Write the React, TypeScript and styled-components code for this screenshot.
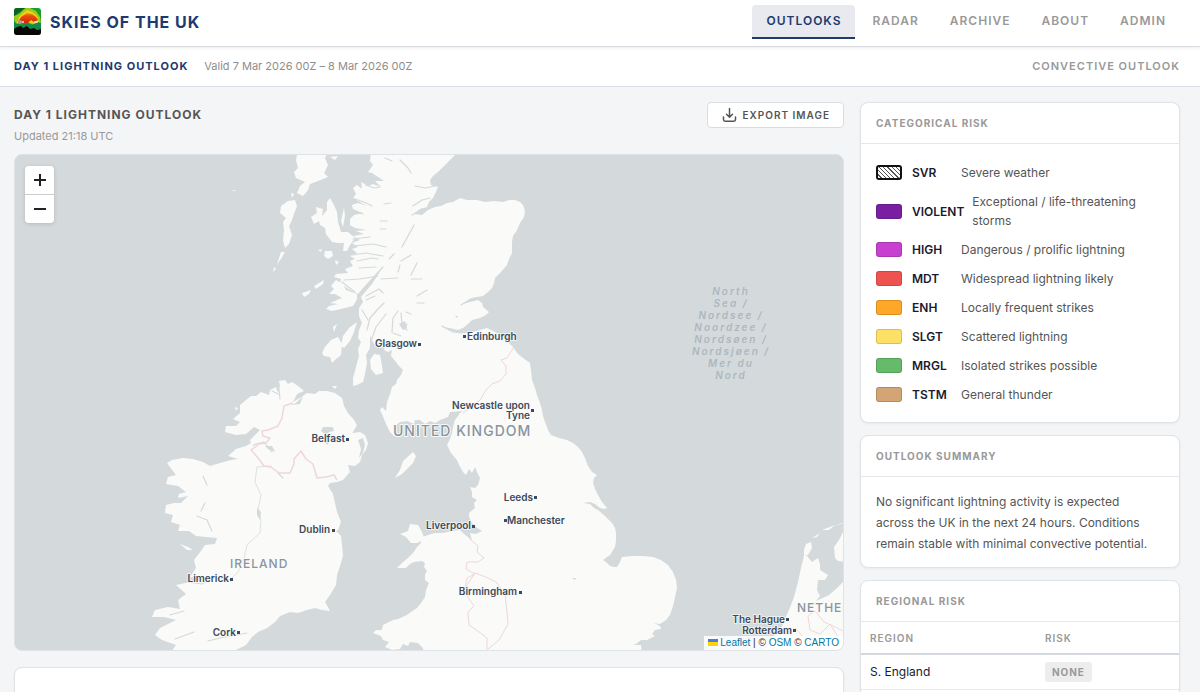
import React from "react";
import styled, { createGlobalStyle } from "styled-components";

const GlobalStyle = createGlobalStyle`
  *, *::before, *::after { box-sizing: border-box; }
  body {
    margin: 0;
    background: #f4f5f7;
    color: #1a1a2e;
    font-family: Inter, "Liberation Sans", sans-serif;
    font-size: 13px;
    overflow-x: hidden;
  }
  h1, h2, p, ul { margin: 0; padding: 0; }
`;

const Header = styled.header`
  display: flex;
  justify-content: space-between;
  height: 47px;
  padding: 5px 20px 0 14px;
  background: #fff;
  border-bottom: 1px solid #d9dce1;
  box-shadow: 0 1px 3px rgba(0, 0, 0, 0.08);
  position: relative;
`;

const Brand = styled.a`
  display: flex;
  align-items: center;
  gap: 9px;
  height: 33px;
  color: #1e3a6e;
  font-size: 16px;
  font-weight: 700;
  letter-spacing: 1px;
  text-decoration: none;
`;

const Nav = styled.nav`
  display: flex;
  gap: 3px;
`;

const NavLink = styled.a<{ $active?: boolean }>`
  height: 34px;
  padding: 0 14px;
  line-height: 31px;
  font-size: 12px;
  font-weight: 600;
  letter-spacing: 1px;
  text-decoration: none;
  border-radius: 4px 4px 0 0;
  border-bottom: 2px solid ${(p) => (p.$active ? "#1e3a6e" : "transparent")};
  background: ${(p) => (p.$active ? "#e8eaef" : "transparent")};
  color: ${(p) => (p.$active ? "#1e3a6e" : "#999")};
`;

const SubBar = styled.div`
  display: flex;
  align-items: center;
  gap: 16px;
  height: 40px;
  padding: 0 20px 2px 14px;
  background: #fff;
  border-bottom: 1px solid #d9dce3;
  font-size: 11px;
`;

const SubTitle = styled.span`
  color: #1e3a6e;
  font-weight: 700;
  letter-spacing: 1px;
`;

const Valid = styled.span`
  color: #8e8e8e;
`;

const SubKind = styled.span`
  margin-left: auto;
  color: #999;
  font-weight: 600;
  letter-spacing: 1px;
`;

const Page = styled.main`
  display: grid;
  grid-template-columns: minmax(0, 1fr) 320px;
  gap: 16px;
  padding: 15px 20px 0 14px;
`;

const Column = styled.div<{ $gap: number }>`
  display: flex;
  flex-direction: column;
  gap: ${(p) => p.$gap}px;
  min-width: 0;
`;

const MapHead = styled.div`
  display: flex;
  justify-content: space-between;
  align-items: flex-start;
  height: 36px;
`;

const MapTitle = styled.h1`
  padding-top: 4px;
  color: #555;
  font-size: 12px;
  line-height: 18px;
  font-weight: 700;
  letter-spacing: 1px;
`;

const Updated = styled.p`
  padding-top: 4px;
  color: #999;
  font-size: 11px;
  line-height: 16px;
`;

const ExportButton = styled.button`
  display: flex;
  align-items: center;
  gap: 6px;
  height: 26px;
  padding: 0 13px 0 14px;
  background: #fff;
  border: 1px solid #d9dce1;
  border-radius: 4px;
  color: #555;
  font: 600 10px Inter, sans-serif;
  letter-spacing: 1px;
`;

const MapFrame = styled.section`
  position: relative;
  height: 497px;
  border: 1px solid #dfe2e7;
  border-radius: 8px;
  overflow: hidden;
  background: #d4dadc;
`;

const MapDrawing = styled.svg`
  display: block;
  width: 100%;
  height: 100%;
`;

const ZoomControl = styled.div`
  position: absolute;
  top: 11px;
  left: 10px;
  display: flex;
  flex-direction: column;
  border-radius: 4px;
  overflow: hidden;
  box-shadow: 0 1px 4px rgba(0, 0, 0, 0.15);
`;

const ZoomButton = styled.button`
  display: flex;
  align-items: center;
  justify-content: center;
  width: 29px;
  height: 28px;
  padding: 0;
  border: 0;
  background: #fff;
  color: #222;
  & + & { height: 29px; border-top: 1px solid #ccc; }
`;

const Attribution = styled.div`
  position: absolute;
  right: 0;
  bottom: 0;
  padding: 0 4px;
  background: rgba(255, 255, 255, 0.85);
  color: #333;
  font: 10px/14px "Liberation Sans", Arial, sans-serif;
  white-space: nowrap;
`;

const AttributionLink = styled.a`
  color: #0078a8;
  text-decoration: none;
`;

const Card = styled.section`
  background: #fff;
  border: 1px solid #dfe2e7;
  border-radius: 8px;
  box-shadow: 0 1px 3px rgba(0, 0, 0, 0.05);
  overflow: hidden;
`;

const CardTitle = styled.h2`
  height: 41px;
  padding: 0 15px;
  border-bottom: 1px solid #e6e8eb;
  color: #999;
  font-size: 10px;
  line-height: 41px;
  font-weight: 700;
  letter-spacing: 1px;
`;

const Legend = styled.ul`
  padding: 14px 15px 13px;
  list-style: none;
`;

const LegendRow = styled.li`
  display: flex;
  align-items: center;
  gap: 8px;
  padding: 5px 0;
  font-size: 12px;
  line-height: 19px;
`;

const Swatch = styled.span<{ $color: string; $hatched?: boolean }>`
  flex: none;
  width: 26px;
  height: 15px;
  margin-right: 2px;
  border: ${(p) => (p.$hatched ? "2px solid #111" : "1px solid rgba(0, 0, 0, 0.15)")};
  border-radius: 3px;
  background: ${(p) =>
    p.$hatched
      ? "repeating-linear-gradient(45deg, #fff 0 2px, #555 2px 3px)"
      : p.$color};
`;

const Code = styled.span`
  flex: none;
  min-width: 41px;
  font-weight: 600;
`;

const Meaning = styled.span`
  color: #555;
`;

const Summary = styled.p`
  padding: 14px 24px 13px 15px;
  color: #555;
  font-size: 12px;
  line-height: 21px;
`;

const RiskTable = styled.table`
  width: 100%;
  margin-bottom: 16px;
  border-collapse: collapse;
  table-layout: fixed;
`;

const HeadCell = styled.th`
  height: 32px;
  padding: 0 9px;
  border-bottom: 2px solid #d5d8de;
  color: #999;
  font-size: 10px;
  font-weight: 600;
  letter-spacing: 1px;
  text-align: left;
  &:first-child { width: 55%; }
`;

const Cell = styled.td`
  height: 35px;
  padding: 0 9px;
  border-bottom: 1px solid #e6e8eb;
  font-size: 12px;
`;

const Badge = styled.span`
  display: inline-block;
  padding: 0 7px;
  border-radius: 3px;
  background: #ededee;
  color: #999;
  font-size: 10px;
  line-height: 20px;
  font-weight: 700;
  letter-spacing: 1px;
`;

const LowerCard = styled(Card)`
  height: 120px;
`;

const RISKS = [
  { code: "SVR", text: "Severe weather", color: "#fff", hatched: true },
  { code: "VIOLENT", text: "Exceptional / life-threatening storms", color: "#7b1fa2" },
  { code: "HIGH", text: "Dangerous / prolific lightning", color: "#c840d0" },
  { code: "MDT", text: "Widespread lightning likely", color: "#ef5350" },
  { code: "ENH", text: "Locally frequent strikes", color: "#ffa726" },
  { code: "SLGT", text: "Scattered lightning", color: "#ffe066" },
  { code: "MRGL", text: "Isolated strikes possible", color: "#66bb6a" },
  { code: "TSTM", text: "General thunder", color: "#d4a574" },
];

const REGIONS = [{ name: "S. England", risk: "NONE" }];

const GREAT_BRITAIN =
  "M371 150H459L455 155 450 160 444 166 438 172 433 176 430 180 431 185 438 187 436 192 433 198 429 202 427 207 420 209 414 214 422 215 428 210 435 207 441 206 447 203 453 202 460 198 467 200 477 200 485 202 494 201 503 202 509 200 515 200 520 202 523 205 525 211 524 217 520 223 517 230 513 236 512 242 512 253 509 259 507 265 501 272 495 278 494 283 492 288 488 292 483 296 477 297 472 298 467 301 462 304 470 302 478 300 482 303 483 307 489 312 486 315 480 318 472 320 468 324 463 328 458 330 450 328 442 327 451 331 460 333 470 333 480 330 487 328 495 332 503 337 508 342 513 347 518 354 523 358 530 363 531 371 532 380 535 388 537 395 540 403 542 410 543 416 545 422 548 430 551 435 559 438 567 440 573 443 578 447 582 452 585 458 588 466 592 472 597 475 594 478 593 483 595 489 598 495 602 502 607 508 604 509 600 508 595 504 590 502 583 503 590 504 594 508 598 510 605 516 612 523 615 528 616 533 616 541 615 547 610 555 603 560 606 562 610 566 614 567 617 567 620 562 622 557 633 556 643 556 653 557 661 560 668 565 673 572 676 580 677 588 675 597 673 606 670 615 666 620 660 624 654 623 660 626 661 629 655 630 652 634 655 636 647 640 641 640 636 644 633 645 641 645 642 656H423L423 648 418 643 410 642 408 646 403 644 400 649 392 650 385 647 389 642 383 640 381 636 373 633 376 630 382 630 383 625 393 620 398 619 407 615 411 612 417 608 421 603 425 597 426 590 429 583 425 580 425 575 427 571 424 567 425 563 422 561 414 562 410 564 406 568 397 568 403 562 408 558 413 553 417 547 421 543 420 538 428 535 435 533 443 533 452 531 460 530 464 534 468 537 472 541 470 533 476 534 482 531 476 527 472 523 469 517 469 513 475 508 474 503 477 500 472 497 472 492 470 487 475 488 478 485 480 478 477 472 475 467 472 473 469 469 466 475 463 472 459 465 457 460 451 453 447 445 450 439 452 433 453 427 455 420 460 413 463 411 450 412 448 417 445 418 440 420 435 423 430 421 425 424 420 420 415 420 414 424 407 421 400 422 396 425 395 432 394 436 390 432 386 424 382 414 380 410 382 407 386 411 387 402 390 394 392 387 396 384 397 380 401 375 403 370 399 366 396 362 391 356 392 350 388 352 384 350 385 344 381 348 376 347 373 342 370 336 370 348 366 355 367 363 365 374 363 382 357 385 353 386 353 378 355 371 357 363 359 356 358 349 361 342 358 338 359 330 362 323 359 316 359 308 363 302 361 297 366 291 372 284 381 270 383 268 373 278 364 287 358 294 352 291 347 288 340 283 341 279 334 277 336 274 348 273 345 269 353 266 350 261 355 259 350 256 357 253 352 249 358 247 352 243 360 240 353 236 364 234 356 231 366 230 355 228 350 225 350 219 354 215 363 213 353 210 352 205 358 203 367 206 358 201 353 198 356 194 353 188 357 185 362 189 361 182 368 186 373 184 381 187 375 181 384 181 372 173 368 172 373 165 370 161Z";

const IRELAND =
  "M285 380 288 384 292 382 298 386 304 391 297 394 293 402 300 398 307 393 315 394 319 391 327 391 335 393 342 398 344 406 348 413 354 420 357 425 353 432 350 437 347 434 353 433 360 432 365 435 368 443 366 450 362 455 360 462 355 466 348 465 350 472 343 480 337 482 330 483 328 486 333 494 335 503 337 512 341 522 338 530 336 531 341 536 342 545 343 556 340 566 337 575 336 585 330 595 325 602 330 611 322 610 315 608 307 610 298 613 290 612 280 616 275 622 267 628 258 632 252 637 246 645 236 650 232 656H160L171 652 176 645 162 640 155 635 160 628 172 622 176 620 164 617 152 617 155 610 168 607 180 609 178 600 186 594 176 585 190 582 200 579 190 577 196 568 194 560 201 551 205 545 215 544 217 538 206 537 196 536 189 531 178 531 180 525 171 522 173 515 165 513 166 505 174 503 181 503 188 496 178 498 179 494 186 492 178 486 166 484 168 477 176 475 170 467 167 463 172 460 183 458 193 459 203 462 210 466 220 463 231 460 238 459 228 456 236 449 246 446 251 443 250 440 255 435 260 430 254 427 246 434 236 435 225 432 226 426 236 426 240 422 233 419 240 413 240 405 246 400 251 396 256 396 261 392 269 395 270 390 276 387 278 393 280 386 279 381Z";

const ISLANDS = [
  "M297 155 329 150 325 158 328 165 324 173 328 177 318 181 310 184 308 190 303 196 297 193 300 186 305 182 296 178 294 172 298 168 296 160Z",
  "M330 157 338 156 335 160Z",
  "M281 206 288 201 295 200 297 206 294 214 292 220 289 226 292 235 289 244 285 248 283 241 284 230 283 222 286 218 280 213Z",
  "M281 252 285 252 281 259 277 264Z",
  "M291 193 294 194 292 198Z",
  "M274 267 276 269 273 272Z",
  "M330 198 334 205 337 212 338 222 341 232 348 232 355 238 350 245 347 251 343 251 344 243 338 243 332 242 326 234 325 228 320 225 319 221 314 224 311 217 317 213 316 207 323 209 322 216 327 210 327 202Z",
  "M344 208 345 216 343 227 341 221Z",
  "M325 251 332 251 333 256 328 259 324 256Z",
  "M335 260 339 262 336 265Z",
  "M318 250 322 249 321 252Z",
  "M314 286 324 280 323 284 316 289Z",
  "M302 293 311 290 309 294 304 297Z",
  "M331 286 336 280 343 284 346 290 357 294 357 299 353 306 345 308 332 311 326 309 329 306 338 304 330 303 342 298 335 294 329 294 334 289Z",
  "M333 327 337 324 334 332Z",
  "M357 322 354 332 350 341 344 348 341 346 343 336 349 328Z",
  "M325 347 331 340 338 337 342 344 341 355 335 360 332 363 330 357 324 356 322 353Z",
  "M374 354 380 355 382 366 383 373 376 375 371 369 370 360Z",
  "M413 452 416 456 413 463 408 468 402 474 395 478 400 470 403 461Z",
  "M410 524 418 525 422 532 424 538 418 543 411 543 406 537 400 534 408 531Z",
  "M332 386 337 386 335 389Z",
  "M180 544 188 547 193 550 187 550Z",
  "M232 190 236 190 234 191Z",
  "M235 407 238 408 236 411Z",
];

const CONTINENT =
  "M850 520 842 523 834 526 844 523 850 522ZM822 530 835 525 829 530ZM812 538 820 533 817 537ZM806 544 811 542 812 548 808 555 804 556 804 550ZM804 556 807 556 812 562 818 558 820 564 820 570 828 575 825 580 818 580 817 590 820 596 816 601 829 595 836 589 843 582 850 578V656H760L775 635 782 626 789 610 794 597 798 582 801 568ZM835 558 838 561 850 562V528L843 532 839 540 834 547Z";

const SEA_LOCHS = [
  "M383 267 372 279 361 292M402 247 414 225M389 259 394 254M400 160 408 168 411 173M392 161 385 158M412 215 422 209M413 206 422 200 430 198M415 186 425 188 435 186M366 185 374 188 380 187M352 198 364 202 372 206M352 209 363 214M384 204 391 203M380 221 387 221M380 229 386 229",
  "M353 239 370 237M354 246 373 244 386 247M352 255 366 253 383 256M357 261 372 258 378 259M359 268 376 267M344 280 360 279 378 276M381 279 398 278M411 279 422 279M400 265 398 272M411 275 417 263M401 261 411 255M417 296 427 290M417 303 424 303M342 282 355 292M366 296 379 289 383 293M366 300 375 296",
  "M371 341 376 327 386 314M384 303 378 309 370 318 367 330M392 332 393 318 398 311M401 313 402 325 407 330M393 333 401 336M406 312 411 314M442 326 453 332 462 333M461 305 471 299 481 298M362 310 368 320",
  "M407 324 404 329M279 389 280 399M278 394 272 391M253 445 264 442 272 452M278 473 283 478M203 476 207 485M201 511 205 503M197 516 207 520 212 531M187 582 202 584 216 576M208 641 220 638 247 633M175 639 194 632M170 615 184 611",
];

const INLAND_WATERS = [
  "M323 427 333 427 334 431 329 432 326 435 321 431Z",
  "M322 441 329 441 328 445Z",
  "M399 324 405 321 407 328 403 330Z",
  "M265 446 272 446 275 452 268 449Z",
  "M257 508 261 512 260 520 257 515Z",
  "M455 316 458 316 457 318Z",
  "M572 578 576 578 575 580Z",
  "M296 403 303 396 300 404 291 405Z",
];

const NI_BORDER =
  "M293 403 284 406 282 418 278 426 268 430 262 431 263 436 270 438 266 443 259 444 251 450 258 458 264 466 271 467 279 473 290 473 294 464 294 459 301 451 306 459 313 464 317 478 326 477 334 475 337 480";
const SCOTS_BORDER =
  "M514 347 507 358 501 360 506 366 506 374 500 381 492 384 486 390 480 400 472 406 463 413";
const WALES_BORDER =
  "M471 540 478 546 477 552 484 558 478 562 467 562 466 569 475 574 467 578 465 588 475 573 486 577 496 582 505 594 507 612 508 624 499 640 488 649M467 596 474 606 468 612 469 625 482 634 487 638 487 650";
const SHANNON = "M271 466 257 467 255 482 261 495 258 510 261 520 260 533 247 545 244 558 238 572 230 580 216 578";
const DUTCH_BORDERS = "M845 632 833 626 824 622 815 611 808 616 810 630 820 634 830 624 840 640M795 628 806 640 818 641";

const CITIES = [
  { name: "Glasgow", x: 417, y: 347, dot: [419, 344], anchor: "end" },
  { name: "Edinburgh", x: 467, y: 340, dot: [464, 336], anchor: "start" },
  { name: "Newcastle upon", x: 530, y: 409, dot: [532, 410], anchor: "end" },
  { name: "Tyne", x: 530, y: 419, anchor: "end" },
  { name: "Belfast", x: 345, y: 442, dot: [347, 439], anchor: "end" },
  { name: "Leeds", x: 533, y: 501, dot: [535, 497], anchor: "end" },
  { name: "Liverpool", x: 471, y: 529, dot: [473, 526], anchor: "end" },
  { name: "Manchester", x: 507, y: 524, dot: [505, 520], anchor: "start" },
  { name: "Dublin", x: 330, y: 533, dot: [333, 530], anchor: "end" },
  { name: "Limerick", x: 229, y: 582, dot: [231, 579], anchor: "end" },
  { name: "Birmingham", x: 517, y: 595, dot: [520, 592], anchor: "end" },
  { name: "Cork", x: 236, y: 636, dot: [238, 632], anchor: "end" },
  { name: "The Hague", x: 785, y: 623, dot: [787, 619], anchor: "end" },
  { name: "Rotterdam", x: 792, y: 634, dot: [794, 630], anchor: "end" },
] as { name: string; x: number; y: number; dot?: number[]; anchor: "start" | "end" }[];

const COUNTRIES = [
  { name: "UNITED KINGDOM", x: 393, y: 436, size: 14 },
  { name: "IRELAND", x: 230, y: 568, size: 12 },
  { name: "NETHER", x: 797, y: 612, size: 12 },
];

const SEA_NAME = ["North", "Sea /", "Nordsee /", "Noordzee /", "Nordsøen /", "Nordsjøen /", "Mer du", "Nord"];

const CityText = styled.text`
  font: 600 10px Inter, sans-serif;
  fill: #3d4a5c;
  stroke: #fafaf8;
  stroke-width: 2px;
  stroke-opacity: 0.7;
  stroke-linejoin: round;
  paint-order: stroke;
`;

const CountryText = styled.text<{ $size: number }>`
  font: 500 ${(p) => p.$size}px Inter, sans-serif;
  letter-spacing: 1px;
  fill: #8994a1;
  stroke: #fafaf8;
  stroke-width: 2px;
  stroke-linejoin: round;
  paint-order: stroke;
`;

const SeaText = styled.text`
  font: italic 600 10px Inter, sans-serif;
  letter-spacing: 2px;
  fill: #acb7bf;
  text-anchor: middle;
`;

function Logo() {
  return (
    <svg width="27" height="27" viewBox="0 0 27 27" aria-hidden="true">
      <defs>
        <clipPath id="logo-clip"><rect width="27" height="27" rx="3" /></clipPath>
        <linearGradient id="logo-heat" x1="0" y1="0" x2="0" y2="1">
          <stop offset="0" stopColor="#f39a10" />
          <stop offset="0.3" stopColor="#e8500c" />
          <stop offset="1" stopColor="#d32408" />
        </linearGradient>
      </defs>
      <g clipPath="url(#logo-clip)">
        <rect width="27" height="27" fill="#1d9c2b" />
        <path d="M0 0H11L8 3 4 5 0 9Z" fill="#0a6420" />
        <path d="M0 8 5 6 9 2 12 0H16L22 3 26 9 27 15 23 18 12 14 5 15 1 17Z" fill="#9fcb1c" />
        <path d="M3 15 5 9 9 5 13 2 18 4 23 8 25 14 22 16 12 14Z" fill="#f0d316" />
        <path d="M4 14 7 9 13 5 18 6 22 9 24 12 20 14 17 12 14 15 8 15Z" fill="url(#logo-heat)" />
        <path d="M0 13 3 16 8 17 13 15 18 17 24 14 27 15V21H0Z" fill="#128a4e" />
        <path d="M0 21 3 19 7 18 9 20 13 18 16 21 20 20 23 22 27 21V27H0Z" fill="#0a0806" />
        <circle cx="6" cy="14" r="2" fill="#b99a90" />
        <circle cx="9" cy="14" r="1" fill="#e9e4dc" />
        <ellipse cx="22" cy="14" rx="2" ry="1" fill="#efe3bd" />
      </g>
    </svg>
  );
}

function DownloadIcon() {
  return (
    <svg width="15" height="16" viewBox="0 0 15 16" fill="none" stroke="#555" strokeWidth="1.5" strokeLinecap="round" strokeLinejoin="round" aria-hidden="true">
      <path d="M7.5 1.5V10M4.5 7.3 7.5 10.3 10.5 7.3M1.5 10V12.5Q1.5 14.2 3.2 14.2H11.8Q13.5 14.2 13.5 12.5V10" />
    </svg>
  );
}

function WeatherMap() {
  return (
    <MapDrawing viewBox="15 155 828 495" preserveAspectRatio="xMidYMid slice" role="img" aria-label="Map of the United Kingdom and Ireland">
      <g fill="#fafaf8">
        <path d={GREAT_BRITAIN} />
        <path d={IRELAND} />
        <path d={CONTINENT} />
        {ISLANDS.map((d) => <path key={d} d={d} />)}
      </g>
      <path d="M358 440 363 438 365 445 363 453 359 458 361 449Z" fill="#d4dadc" />
      <g fill="none" stroke="#d4dadc" strokeLinejoin="round" strokeLinecap="round">
        {SEA_LOCHS.map((d) => <path key={d} d={d} strokeWidth="1.2" />)}
        <path d={SHANNON} strokeWidth="0.8" />
      </g>
      <g fill="#d4dadc">
        {INLAND_WATERS.map((d) => <path key={d} d={d} />)}
      </g>
      <g fill="none" stroke="#efd6da" strokeLinejoin="round">
        <path d={NI_BORDER} strokeWidth="1.5" />
        <path d={SCOTS_BORDER} />
        <path d={WALES_BORDER} />
        <path d={DUTCH_BORDERS} />
      </g>
      {COUNTRIES.map((c) => <CountryText key={c.name} $size={c.size} x={c.x} y={c.y}>{c.name}</CountryText>)}
      {CITIES.map((c) => (
        <g key={c.name}>
          <CityText x={c.x} y={c.y} textAnchor={c.anchor}>{c.name}</CityText>
          {c.dot && <rect x={c.dot[0] - 1} y={c.dot[1] - 1} width="3" height="3" fill="#3d4a5c" />}
        </g>
      ))}
      {SEA_NAME.map((line, i) => <SeaText key={line} x={731} y={295 + i * 12}>{line}</SeaText>)}
    </MapDrawing>
  );
}

export default function App() {
  return (
    <>
      <GlobalStyle />
      <Header>
        <Brand href="#"><Logo />SKIES OF THE UK</Brand>
        <Nav>
          <NavLink href="#outlooks" $active>OUTLOOKS</NavLink>
          <NavLink href="#radar">RADAR</NavLink>
          <NavLink href="#archive">ARCHIVE</NavLink>
          <NavLink href="#about">ABOUT</NavLink>
          <NavLink href="#admin">ADMIN</NavLink>
        </Nav>
      </Header>
      <SubBar>
        <SubTitle>DAY 1 LIGHTNING OUTLOOK</SubTitle>
        <Valid>Valid 7 Mar 2026 00Z – 8 Mar 2026 00Z</Valid>
        <SubKind>CONVECTIVE OUTLOOK</SubKind>
      </SubBar>
      <Page>
        <Column $gap={16}>
          <MapHead>
            <div>
              <MapTitle>DAY 1 LIGHTNING OUTLOOK</MapTitle>
              <Updated>Updated 21:18 UTC</Updated>
            </div>
            <ExportButton type="button"><DownloadIcon />EXPORT IMAGE</ExportButton>
          </MapHead>
          <MapFrame>
            <WeatherMap />
            <ZoomControl>
              <ZoomButton type="button" aria-label="Zoom in">
                <svg width="12" height="12" stroke="currentColor" strokeWidth="2"><path d="M0 6H12M6 0V12" /></svg>
              </ZoomButton>
              <ZoomButton type="button" aria-label="Zoom out">
                <svg width="12" height="12" stroke="currentColor" strokeWidth="2"><path d="M0 6H12" /></svg>
              </ZoomButton>
            </ZoomControl>
            <Attribution>
              <AttributionLink href="#leaflet">
                <svg width="10" height="7" aria-hidden="true"><path fill="#4c7be1" d="M0 0h10v4H0z" /><path fill="#ffd500" d="M0 3h10v4H0z" /></svg> Leaflet
              </AttributionLink>
              {" | © "}<AttributionLink href="#osm">OSM</AttributionLink>
              {" © "}<AttributionLink href="#carto">CARTO</AttributionLink>
            </Attribution>
          </MapFrame>
          <LowerCard />
        </Column>
        <Column $gap={12}>
          <Card>
            <CardTitle>CATEGORICAL RISK</CardTitle>
            <Legend>
              {RISKS.map((r) => (
                <LegendRow key={r.code}>
                  <Swatch $color={r.color} $hatched={r.hatched} />
                  <Code>{r.code}</Code>
                  <Meaning>{r.text}</Meaning>
                </LegendRow>
              ))}
            </Legend>
          </Card>
          <Card>
            <CardTitle>OUTLOOK SUMMARY</CardTitle>
            <Summary>
              No significant lightning activity is expected across the UK in the next 24 hours. Conditions remain
              stable with minimal convective potential.
            </Summary>
          </Card>
          <Card>
            <CardTitle>REGIONAL RISK</CardTitle>
            <RiskTable>
              <thead>
                <tr><HeadCell scope="col">REGION</HeadCell><HeadCell scope="col">RISK</HeadCell></tr>
              </thead>
              <tbody>
                {REGIONS.map((r) => (
                  <tr key={r.name}><Cell>{r.name}</Cell><Cell><Badge>{r.risk}</Badge></Cell></tr>
                ))}
              </tbody>
            </RiskTable>
          </Card>
        </Column>
      </Page>
    </>
  );
}
